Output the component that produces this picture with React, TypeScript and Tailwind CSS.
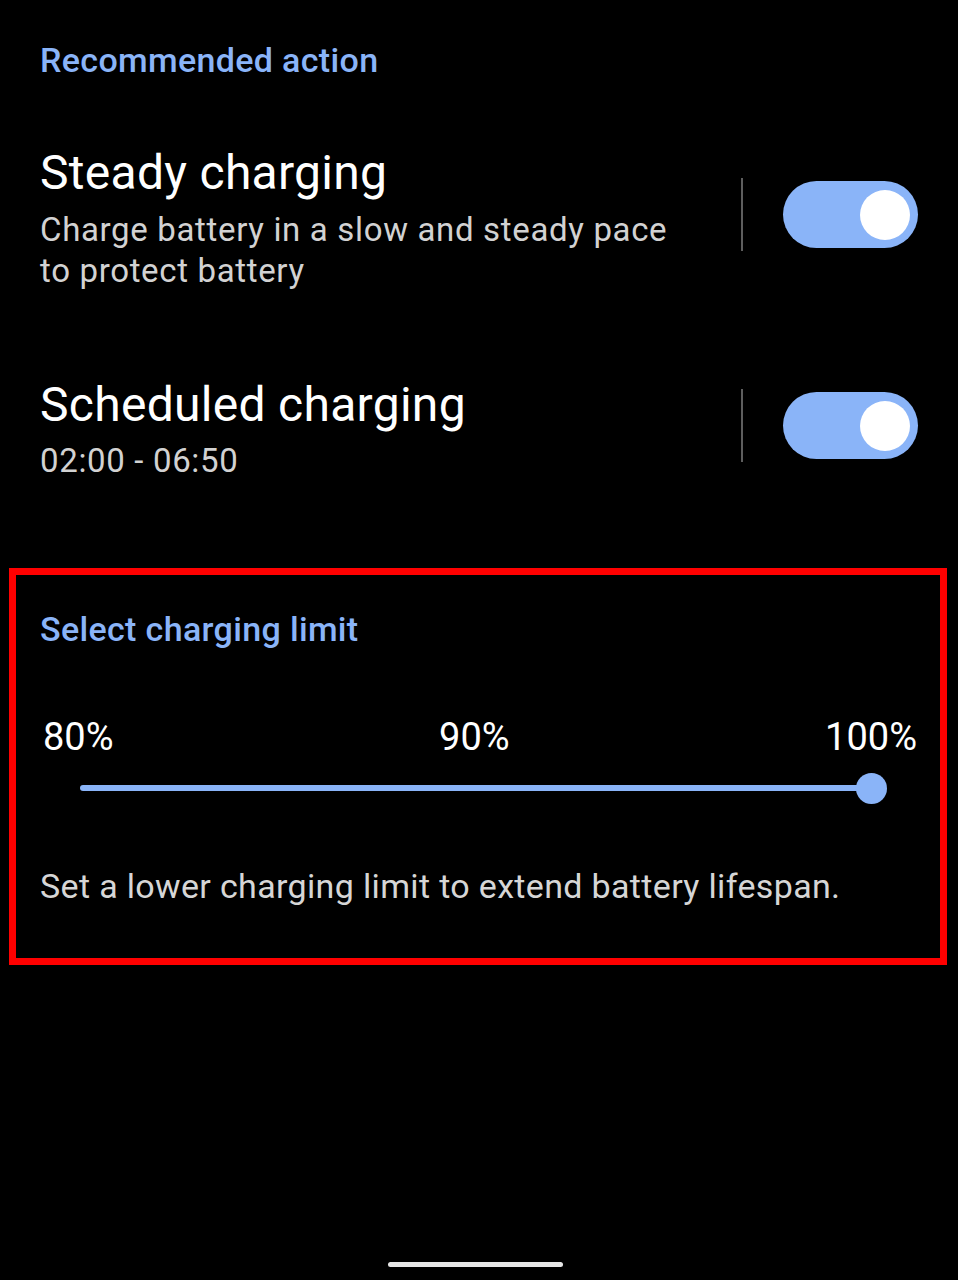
import React from "react";

const font = { fontFamily: "Roboto, 'Noto Sans', sans-serif" };

function Toggle({ className }: { className?: string }) {
  return (
    <div className={`flex items-center ${className ?? ""}`}>
      <div className="w-[2px] h-[73px] bg-[#5e5e5e]" />
      <div className="ml-[40px] w-[135px] h-[67px] rounded-full bg-[#8ab4f8] flex items-center justify-end pr-[8px]">
        <div className="w-[50px] h-[50px] rounded-full bg-white" />
      </div>
    </div>
  );
}

type RowProps = {
  title: string;
  subtitle: React.ReactNode;
  className?: string;
  toggleOffset: string;
  subtitleGap: string;
};

function SettingRow({ title, subtitle, className, toggleOffset, subtitleGap }: RowProps) {
  return (
    <div className={`flex items-start justify-between pl-[40px] pr-[40px] ${className ?? ""}`}>
      <div className="flex flex-col">
        <div className="text-[48px] leading-[56px] tracking-[0.006em] text-white">{title}</div>
        <div className={`${subtitleGap} text-[33px] leading-[41px] tracking-[0.02em] text-[#d2d2d2]`}>
          {subtitle}
        </div>
      </div>
      <Toggle className={toggleOffset} />
    </div>
  );
}

export default function App() {
  return (
    <div className="w-[958px] h-[1280px] bg-black flex flex-col" style={font}>
      <div className="pt-[40px] pl-[40px] text-[34px] leading-[40px] tracking-[0.01em] font-medium text-[#8ab4f8]">
        Recommended action
      </div>

      <SettingRow
        className="mt-[65px]"
        title="Steady charging"
        subtitleGap="mt-[8px]"
        toggleOffset="mt-[33px]"
        subtitle={
          <>
            Charge battery in a slow and steady pace
            <br />
            to protect battery
          </>
        }
      />

      <SettingRow
        className="mt-[86px]"
        title="Scheduled charging"
        subtitleGap="mt-[7px]"
        toggleOffset="mt-[12px]"
        subtitle="02:00 - 06:50"
      />

      <div className="mt-[87px] ml-[9px] w-[938px] h-[397px] border-[7px] border-[#ff0000] flex flex-col">
        <div className="pt-[34px] pl-[24px] text-[34px] leading-[40px] tracking-[0.01em] font-medium text-[#8ab4f8]">
          Select charging limit
        </div>

        <div className="mt-[66px] pl-[27px] pr-[23px] flex justify-between text-[38px] leading-[44px] text-white">
          <span>80%</span>
          <span className="ml-[10px]">90%</span>
          <span>100%</span>
        </div>

        <div className="mt-[13px] ml-[64px] w-[807px] h-[32px] flex items-center">
          <div className="flex-1 h-[6px] rounded-full bg-[#8ab4f8]" />
          <div className="-ml-[16px] w-[31px] h-[31px] rounded-full bg-[#8ab4f8]" />
        </div>

        <div className="mt-[62px] pl-[24px] text-[34px] leading-[40px] tracking-[0.01em] text-[#d6d6d6]">
          Set a lower charging limit to extend battery lifespan.
        </div>
      </div>

      <div className="mt-auto mb-[13px] ml-[388px] w-[175px] h-[5px] rounded-full bg-[#e6e6e6]" />
    </div>
  );
}
